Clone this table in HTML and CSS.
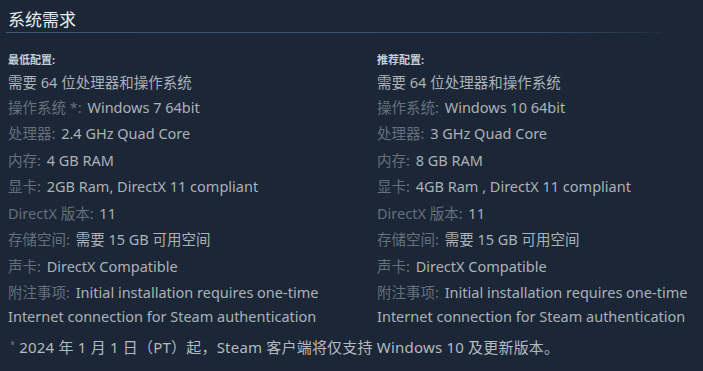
FILE: index.html
```html
<!DOCTYPE html>
<html lang="zh-CN">
<head>
<meta charset="utf-8">
<link rel="stylesheet" href="styles.css">
</head>
<body>
<div class="sysreq">
  <h2 class="title">系统需求</h2>
  <div class="cols">
    <div class="col col-left">
      <div class="head">最低配置:</div>
      <ul class="list">
        <li>需要 64 位处理器和操作系统</li>
        <li><span class="lab">操作系统 *:</span> Windows 7 64bit</li>
        <li><span class="lab">处理器:</span> 2.4 GHz Quad Core</li>
        <li><span class="lab">内存:</span> 4 GB RAM</li>
        <li><span class="lab">显卡:</span> 2GB Ram, DirectX 11 compliant</li>
        <li><span class="lab">DirectX 版本:</span> 11</li>
        <li><span class="lab">存储空间:</span> 需要 15 GB 可用空间</li>
        <li><span class="lab">声卡:</span> DirectX Compatible</li>
        <li><span class="lab">附注事项:</span> Initial installation requires one-time Internet connection for Steam authentication</li>
      </ul>
    </div>
    <div class="col">
      <div class="head">推荐配置:</div>
      <ul class="list">
        <li>需要 64 位处理器和操作系统</li>
        <li><span class="lab">操作系统:</span> Windows 10 64bit</li>
        <li><span class="lab">处理器:</span> 3 GHz Quad Core</li>
        <li><span class="lab">内存:</span> 8 GB RAM</li>
        <li><span class="lab">显卡:</span> 4GB Ram , DirectX 11 compliant</li>
        <li><span class="lab">DirectX 版本:</span> 11</li>
        <li><span class="lab">存储空间:</span> 需要 15 GB 可用空间</li>
        <li><span class="lab">声卡:</span> DirectX Compatible</li>
        <li><span class="lab">附注事项:</span> Initial installation requires one-time Internet connection for Steam authentication</li>
      </ul>
    </div>
  </div>
  <p class="note"><sup class="star">*</sup> 2024 年 1 月 1 日（PT）起，Steam 客户端将仅支持 Windows 10 及更新版本。</p>
</div>
</body>
</html>
```
FILE: styles.css
```css
html, body {
  margin: 0;
  padding: 0;
  background: #1b2636;
}
body {
  font-family: "Noto Sans", "Noto Sans CJK SC", sans-serif;
  color: #acb2b8;
  width: 703px;
  height: 371px;
  overflow: hidden;
}
.sysreq {
  padding: 10px 0 0 8px;
}
.title {
  margin: 0 0 0 -2px;
  padding: 0 0 3px 2px;
  width: 653px;
  font-size: 17px;
  font-weight: normal;
  line-height: 20px;
  color: #e8edf1;
  border-bottom: 1px solid transparent;
  background-image: linear-gradient(to right, #3a5b75 0%, #34546c 80%, rgba(52,83,107,0.2) 100%);
  background-size: 100% 1px;
  background-repeat: no-repeat;
  background-position: bottom left;
}
.cols {
  display: grid;
  grid-template-columns: 369px 320px;
  margin-top: 16px;
}
.col-left {
  padding-right: 24px;
}
.head {
  font-size: 11px;
  font-weight: bold;
  line-height: 20px;
  color: #c6d0d8;
}
.list {
  list-style: none;
  margin: 0;
  padding: 0;
  font-size: 14.5px;
  line-height: 24px;
}
.list li {
  margin-bottom: 2.5px;
}
.list li:first-child {
  margin-bottom: 0.5px;
}
.lab {
  color: #65707b;
  margin-right: 2px;
}
.note {
  margin: 4px 0 0 0;
  font-size: 15px;
  letter-spacing: 0.2px;
  line-height: 20px;
  color: #b4bac0;
}
.star {
  font-size: 9px;
  vertical-align: 5px;
  color: #6c7681;
  margin-left: 2px;
}
```
